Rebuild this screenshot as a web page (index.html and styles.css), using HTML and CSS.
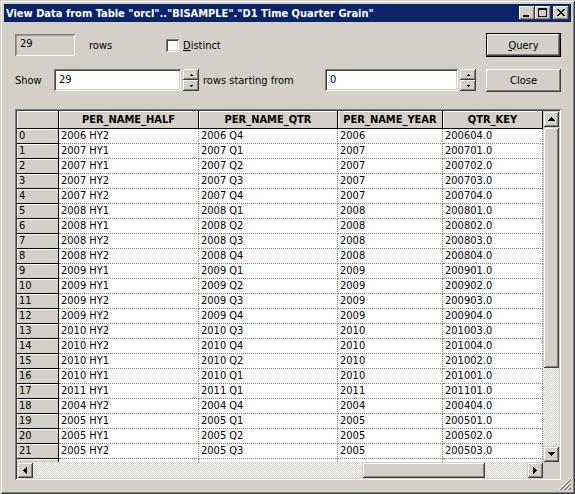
FILE: index.html
```html
<!DOCTYPE html>
<html lang="en">
<head>
  <meta charset="UTF-8" />
  <title>View Data</title>
  <link rel="stylesheet" href="styles.css">
</head>
<body>
  <div class="window">
    <div class="titlebar">
      <span class="title">View Data from Table "orcl".."BISAMPLE"."D1 Time Quarter Grain"</span>
      <span class="tbtn"><svg width="16" height="14" viewBox="0 0 16 14"><rect x="4" y="9" width="6" height="2"/></svg></span>
      <span class="tbtn"><svg width="16" height="14" viewBox="0 0 16 14"><path fill-rule="evenodd" d="M3 2h9v9H3z M4 4v6h7V4z"/></svg></span>
      <span class="tbtn tbtn-close"><svg width="16" height="14" viewBox="0 0 16 14"><path d="M4 3h2v1H4z M10 3h2v1h-2z M5 4h2v1H5z M9 4h2v1H9z M6 5h4v1H6z M7 6h2v1H7z M6 7h4v1H6z M5 8h2v1H5z M9 8h2v1H9z M4 9h2v1H4z M10 9h2v1h-2z"/></svg></span>
    </div>

    <div class="client">
      <div class="row">
        <div class="count">29</div>
        <span class="lbl-rows">rows</span>
        <span class="check"></span>
        <span class="check-lbl"><u>D</u>istinct</span>
        <span class="spacer"></span>
        <div class="btn btn-default"><u>Q</u>uery</div>
      </div>

      <div class="row row-show">
        <span class="lbl-show">Show</span>
        <div class="field field-show">29</div>
        <div class="spin">
          <span class="spin-btn"><svg width="3" height="2" viewBox="0 0 3 2"><path d="M1 0h1v1h1v1H0V1h1z"/></svg></span>
          <span class="spin-btn"><svg width="3" height="2" viewBox="0 0 3 2"><path d="M0 0h3v1H2v1H1V1H0z"/></svg></span>
        </div>
        <span class="lbl-start">rows starting from</span>
        <div class="field field-start">0</div>
        <div class="spin">
          <span class="spin-btn"><svg width="3" height="2" viewBox="0 0 3 2"><path d="M1 0h1v1h1v1H0V1h1z"/></svg></span>
          <span class="spin-btn"><svg width="3" height="2" viewBox="0 0 3 2"><path d="M0 0h3v1H2v1H1V1H0z"/></svg></span>
        </div>
        <span class="spacer"></span>
        <div class="btn">Close</div>
      </div>

      <div class="grid">
        <div class="viewport">
          <table class="data">
            <tr>
              <th class="w-rh"></th>
              <th class="w-half">PER_NAME_HALF</th>
              <th class="w-qtr">PER_NAME_QTR</th>
              <th class="w-year">PER_NAME_YEAR</th>
              <th class="w-key">QTR_KEY</th>
            </tr>
            <tr><td class="rh">0</td><td>2006 HY2</td><td>2006 Q4</td><td>2006</td><td>200604.0</td></tr>
            <tr><td class="rh">1</td><td>2007 HY1</td><td>2007 Q1</td><td>2007</td><td>200701.0</td></tr>
            <tr><td class="rh">2</td><td>2007 HY1</td><td>2007 Q2</td><td>2007</td><td>200702.0</td></tr>
            <tr><td class="rh">3</td><td>2007 HY2</td><td>2007 Q3</td><td>2007</td><td>200703.0</td></tr>
            <tr><td class="rh">4</td><td>2007 HY2</td><td>2007 Q4</td><td>2007</td><td>200704.0</td></tr>
            <tr><td class="rh">5</td><td>2008 HY1</td><td>2008 Q1</td><td>2008</td><td>200801.0</td></tr>
            <tr><td class="rh">6</td><td>2008 HY1</td><td>2008 Q2</td><td>2008</td><td>200802.0</td></tr>
            <tr><td class="rh">7</td><td>2008 HY2</td><td>2008 Q3</td><td>2008</td><td>200803.0</td></tr>
            <tr><td class="rh">8</td><td>2008 HY2</td><td>2008 Q4</td><td>2008</td><td>200804.0</td></tr>
            <tr><td class="rh">9</td><td>2009 HY1</td><td>2009 Q1</td><td>2009</td><td>200901.0</td></tr>
            <tr><td class="rh">10</td><td>2009 HY1</td><td>2009 Q2</td><td>2009</td><td>200902.0</td></tr>
            <tr><td class="rh">11</td><td>2009 HY2</td><td>2009 Q3</td><td>2009</td><td>200903.0</td></tr>
            <tr><td class="rh">12</td><td>2009 HY2</td><td>2009 Q4</td><td>2009</td><td>200904.0</td></tr>
            <tr><td class="rh">13</td><td>2010 HY2</td><td>2010 Q3</td><td>2010</td><td>201003.0</td></tr>
            <tr><td class="rh">14</td><td>2010 HY2</td><td>2010 Q4</td><td>2010</td><td>201004.0</td></tr>
            <tr><td class="rh">15</td><td>2010 HY1</td><td>2010 Q2</td><td>2010</td><td>201002.0</td></tr>
            <tr><td class="rh">16</td><td>2010 HY1</td><td>2010 Q1</td><td>2010</td><td>201001.0</td></tr>
            <tr><td class="rh">17</td><td>2011 HY1</td><td>2011 Q1</td><td>2011</td><td>201101.0</td></tr>
            <tr><td class="rh">18</td><td>2004 HY2</td><td>2004 Q4</td><td>2004</td><td>200404.0</td></tr>
            <tr><td class="rh">19</td><td>2005 HY1</td><td>2005 Q1</td><td>2005</td><td>200501.0</td></tr>
            <tr><td class="rh">20</td><td>2005 HY1</td><td>2005 Q2</td><td>2005</td><td>200502.0</td></tr>
            <tr><td class="rh">21</td><td>2005 HY2</td><td>2005 Q3</td><td>2005</td><td>200503.0</td></tr>
            <tr class="clipped"><td class="rh"></td><td></td><td></td><td></td><td></td></tr>
          </table>
        </div>

        <div class="vscroll">
          <span class="sbtn"><svg width="7" height="4" viewBox="0 0 7 4"><path d="M3 0h1v1h1v1h1v1h1v1H0V3h1V2h1V1h1z"/></svg></span>
          <span class="thumb thumb-v"></span>
          <span class="track"></span>
          <span class="sbtn"><svg width="7" height="4" viewBox="0 0 7 4"><path d="M0 0h7v1H6v1H5v1H4v1H3V3H2V2H1V1H0z"/></svg></span>
        </div>

        <div class="hscroll">
          <span class="sbtn"><svg width="4" height="7" viewBox="0 0 4 7"><path d="M3 0h1v7H3V6H2V5H1V4H0V3h1V2h1V1h1z"/></svg></span>
          <span class="track track-left"></span>
          <span class="thumb thumb-h"></span>
          <span class="track"></span>
          <span class="sbtn"><svg width="4" height="7" viewBox="0 0 4 7"><path d="M0 0h1v1h1v1h1v1h1v1H3v1H2v1H1v1H0z"/></svg></span>
        </div>

        <div class="corner"></div>
      </div>
    </div>

    <svg class="grip" width="12" height="12" viewBox="0 0 12 12">
      <path d="M12 0L0 12" stroke="#fff"/>
      <path d="M12 1L1 12M12 2L2 12" stroke="#808080"/>
      <path d="M12 4L4 12" stroke="#fff"/>
      <path d="M12 5L5 12M12 6L6 12" stroke="#808080"/>
      <path d="M12 8L8 12" stroke="#fff"/>
      <path d="M12 9L9 12M12 10L10 12" stroke="#808080"/>
    </svg>
  </div>
</body>
</html>
```

FILE: styles.css
```css
body {
  margin: 0;
  font-family: "DejaVu Sans Condensed", "DejaVu Sans", sans-serif;
  font-size: 11px;
  color: #000;
}

.window {
  position: relative;
  width: 575px;
  height: 494px;
  box-sizing: border-box;
  padding: 4px;
  background: #d4d0c8;
  box-shadow: inset 1px 1px #d4d0c8, inset -1px -1px #404040,
              inset 2px 2px #fff, inset -2px -2px #808080;
  display: flex;
  flex-direction: column;
}

/* title bar */
.titlebar {
  height: 18px;
  background: #0a246a;
  color: #fff;
  font-weight: bold;
  display: flex;
  align-items: center;
  padding: 0 2px;
}

.title {
  flex: 1;
  white-space: nowrap;
}

.tbtn {
  width: 16px;
  height: 14px;
  background: #d4d0c8;
  box-shadow: inset -1px -1px #404040, inset 1px 1px #fff, inset -2px -2px #808080;
  display: flex;
}

.tbtn-close {
  margin-left: 2px;
}

/* client area */
.client {
  flex: 1;
  margin-top: 1px;
  padding: 10px 10px 0 11px;
  display: flex;
  flex-direction: column;
}

.row {
  height: 24px;
  display: flex;
  align-items: center;
}

.row-show {
  margin-top: 11px;
}

.spacer {
  flex: 1;
}

.count {
  width: 60px;
  height: 22px;
  box-sizing: border-box;
  padding: 3px 5px;
  box-shadow: inset 1px 1px #808080, inset -1px -1px #fff, inset 2px 2px #a09c94;
}

.lbl-rows {
  margin-left: 14px;
  width: 77px;
}

.check {
  width: 13px;
  height: 13px;
  background: #fff;
  box-shadow: inset 1px 1px #808080, inset -1px -1px #fff,
              inset 2px 2px #404040, inset -2px -2px #d4d0c8;
}

.check-lbl {
  margin-left: 4px;
}

.btn {
  width: 75px;
  height: 23px;
  box-sizing: border-box;
  display: flex;
  align-items: center;
  justify-content: center;
  background: #d4d0c8;
  box-shadow: inset -1px -1px #404040, inset 1px 1px #fff, inset -2px -2px #808080;
}

.btn-default {
  height: 24px;
  border: 1px solid #000;
}

.lbl-show {
  width: 39px;
}

.field {
  height: 22px;
  box-sizing: border-box;
  padding: 4px 5px;
  background: #fff;
  box-shadow: inset 1px 1px #808080, inset -1px -1px #fff,
              inset 2px 2px #404040, inset -2px -2px #d4d0c8;
}

.field-show {
  width: 127px;
}

.field-start {
  width: 133px;
}

.spin {
  margin-left: 2px;
  width: 16px;
  height: 22px;
  display: flex;
  flex-direction: column;
}

.spin-btn {
  height: 11px;
  display: flex;
  align-items: center;
  justify-content: center;
  background: #d4d0c8;
  box-shadow: inset -1px -1px #404040, inset 1px 1px #fff, inset -2px -2px #808080;
}

.lbl-start {
  margin-left: 4px;
  width: 122px;
  white-space: nowrap;
}

/* data grid */
.grid {
  margin-top: 17px;
  width: 546px;
  height: 371px;
  box-sizing: border-box;
  padding: 2px;
  box-shadow: inset 1px 1px #808080, inset -1px -1px #fff,
              inset 2px 2px #404040, inset -2px -2px #d4d0c8;
  display: grid;
  grid-template-columns: 526px 16px;
  grid-template-rows: 351px 16px;
}

.viewport {
  overflow: hidden;
  background: #fff;
}

.data {
  width: 526px;
  table-layout: fixed;
  border-collapse: separate;
  border-spacing: 0;
  font-size: 11px;
}

.data th {
  box-sizing: border-box;
  padding: 0;
  height: 18px;
  line-height: 17px;
  background: #d4d0c8;
  font-weight: bold;
  text-align: center;
  border-right: 1px solid #000;
  border-bottom: 1px solid #000;
  box-shadow: inset 1px 1px #fff;
}

.w-rh { width: 42px; }
.w-half { width: 140px; }
.w-qtr { width: 139px; }
.w-year { width: 105px; }
.w-key { width: 100px; }

.data td {
  padding: 0 2px;
  height: 14px;
  line-height: 14px;
  white-space: nowrap;
  overflow: hidden;
  border-right: 1px dotted #808080;
  border-bottom: 1px dotted #808080;
}

.data td.rh {
  background: #d4d0c8;
  border-right: 1px solid #000;
  border-bottom: 1px solid #000;
  box-shadow: inset 1px 1px #fff;
}

.vscroll {
  display: flex;
  flex-direction: column;
}

.hscroll {
  display: flex;
}

.sbtn {
  flex: none;
  width: 16px;
  height: 16px;
  display: flex;
  align-items: center;
  justify-content: center;
  background: #d4d0c8;
  box-shadow: inset 1px 1px #d4d0c8, inset -1px -1px #404040,
              inset 2px 2px #fff, inset -2px -2px #808080;
}

.thumb {
  flex: none;
  background: #d4d0c8;
  box-shadow: inset 1px 1px #d4d0c8, inset -1px -1px #404040,
              inset 2px 2px #fff, inset -2px -2px #808080;
}

.thumb-v {
  height: 241px;
}

.thumb-h {
  width: 123px;
}

.track {
  flex: 1;
  background: repeating-conic-gradient(#d4d0c8 0 25%, #fff 0 50%) 0 0 / 2px 2px;
}

.track-left {
  flex: none;
  width: 329px;
}

.corner {
  background: #d4d0c8;
}

.grip {
  position: absolute;
  right: 4px;
  bottom: 4px;
}
```
